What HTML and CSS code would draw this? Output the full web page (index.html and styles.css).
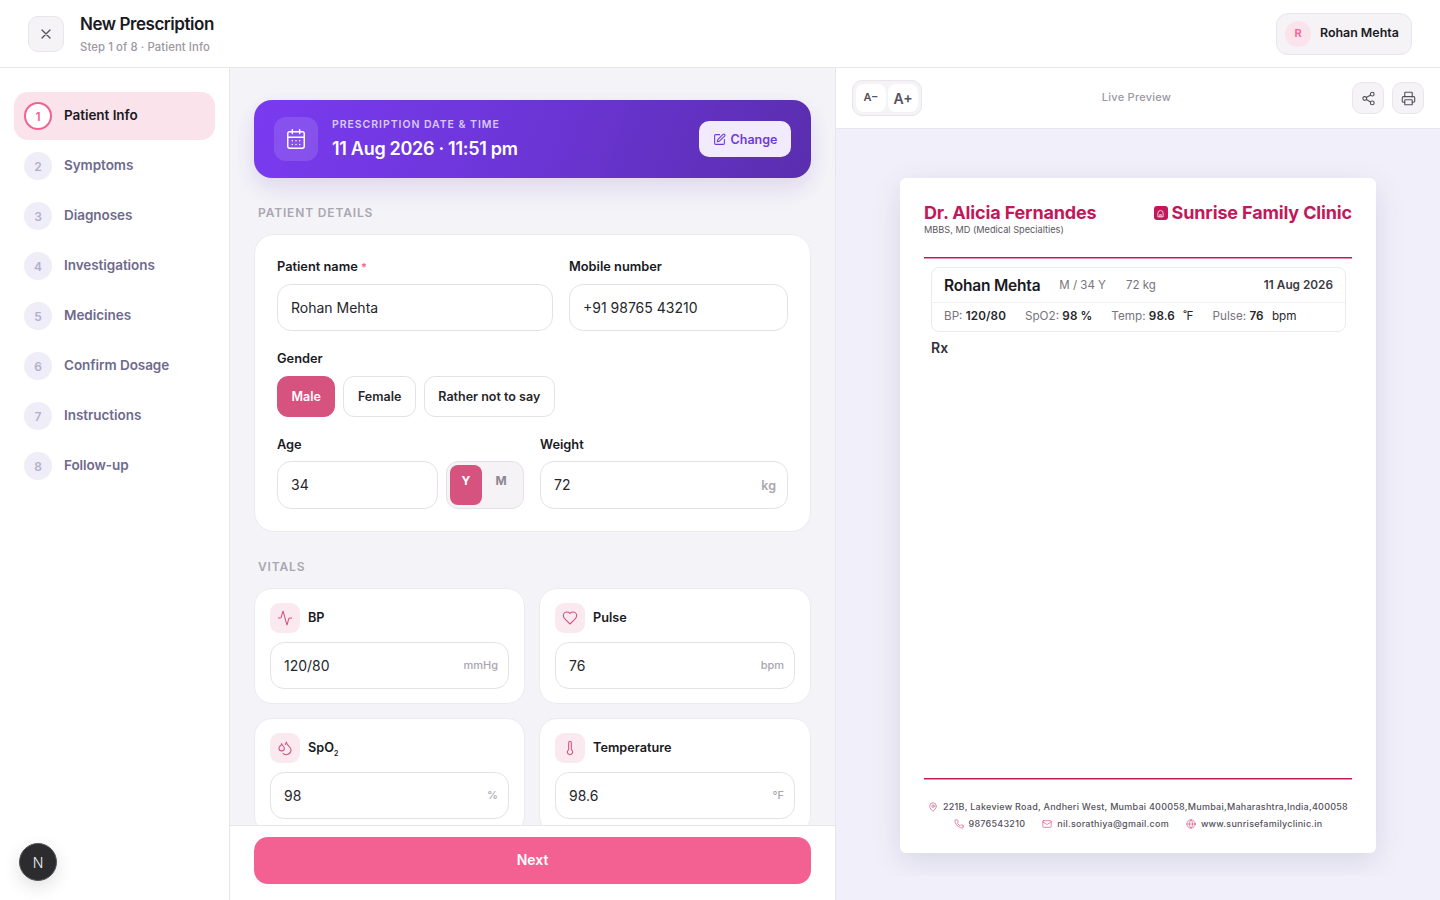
FILE: index.html
```html
<!DOCTYPE html>
<html lang="en">
<head>
  <meta charset="UTF-8">
  <meta name="viewport" content="width=device-width,initial-scale=1">
  <title>New Prescription</title>
  <link rel="stylesheet" href="styles.css">
</head>
<body>
  <svg class="sprite" aria-hidden="true">
    <symbol id="i-x" viewBox="0 0 24 24"><path d="M18 6 6 18M6 6l12 12"/></symbol>
    <symbol id="i-cal" viewBox="0 0 24 24"><rect x="3" y="4" width="18" height="18" rx="2"/><path d="M16 2v4M8 2v4M3 10h18M8 14h.01M12 14h.01M16 14h.01M8 18h.01M12 18h.01M16 18h.01"/></symbol>
    <symbol id="i-edit" viewBox="0 0 24 24"><path d="M12 3H5a2 2 0 0 0-2 2v14a2 2 0 0 0 2 2h14a2 2 0 0 0 2-2v-7"/><path d="M18.375 2.625a1 1 0 0 1 3 3l-9.013 9.014a2 2 0 0 1-.853.505l-2.873.84a.5.5 0 0 1-.62-.62l.84-2.873a2 2 0 0 1 .506-.852z"/></symbol>
    <symbol id="i-activity" viewBox="0 0 24 24"><path d="M22 12h-2.48a2 2 0 0 0-1.93 1.46l-2.35 8.36a.25.25 0 0 1-.48 0L9.24 2.18a.25.25 0 0 0-.48 0l-2.35 8.36A2 2 0 0 1 4.49 12H2"/></symbol>
    <symbol id="i-heart" viewBox="0 0 24 24"><path d="M19 14c1.49-1.46 3-3.21 3-5.5A5.5 5.5 0 0 0 16.5 3c-1.76 0-3 .5-4.5 2-1.5-1.5-2.74-2-4.5-2A5.5 5.5 0 0 0 2 8.5c0 2.3 1.5 4.05 3 5.5l7 7Z"/></symbol>
    <symbol id="i-drops" viewBox="0 0 24 24"><path d="M7 16.3c2.2 0 4-1.83 4-4.05 0-1.16-.57-2.26-1.71-3.19S7.29 6.75 7 5.3c-.29 1.45-1.14 2.84-2.29 3.76S3 11.1 3 12.25c0 2.22 1.8 4.05 4 4.05z"/><path d="M12.56 6.6A10.97 10.97 0 0 0 14 3.02c.5 2.5 2 4.9 4 6.5s3 3.5 3 5.5a6.98 6.98 0 0 1-11.91 4.97"/></symbol>
    <symbol id="i-temp" viewBox="0 0 24 24"><path d="M14 4v10.54a4 4 0 1 1-4 0V4a2 2 0 0 1 4 0Z"/></symbol>
    <symbol id="i-share" viewBox="0 0 24 24"><circle cx="18" cy="5" r="3"/><circle cx="6" cy="12" r="3"/><circle cx="18" cy="19" r="3"/><path d="m8.59 13.51 6.83 3.98M15.41 6.51l-6.82 3.98"/></symbol>
    <symbol id="i-print" viewBox="0 0 24 24"><path d="M6 18H4a2 2 0 0 1-2-2v-5a2 2 0 0 1 2-2h16a2 2 0 0 1 2 2v5a2 2 0 0 1-2 2h-2"/><path d="M6 9V3a1 1 0 0 1 1-1h10a1 1 0 0 1 1 1v6"/><rect x="6" y="14" width="12" height="8" rx="1"/></symbol>
    <symbol id="i-pin" viewBox="0 0 24 24"><path d="M20 10c0 4.993-5.539 10.193-7.399 11.799a1 1 0 0 1-1.202 0C9.539 20.193 4 14.993 4 10a8 8 0 0 1 16 0"/><circle cx="12" cy="10" r="3"/></symbol>
    <symbol id="i-phone" viewBox="0 0 24 24"><path d="M22 16.92v3a2 2 0 0 1-2.18 2 19.79 19.79 0 0 1-8.63-3.07 19.5 19.5 0 0 1-6-6 19.79 19.79 0 0 1-3.07-8.67A2 2 0 0 1 4.11 2h3a2 2 0 0 1 2 1.72 12.84 12.84 0 0 0 .7 2.81 2 2 0 0 1-.45 2.11L8.09 9.91a16 16 0 0 0 6 6l1.27-1.27a2 2 0 0 1 2.11-.45 12.84 12.84 0 0 0 2.81.7A2 2 0 0 1 22 16.92z"/></symbol>
    <symbol id="i-mail" viewBox="0 0 24 24"><rect x="2" y="4" width="20" height="16" rx="2"/><path d="m22 7-8.97 5.7a1.94 1.94 0 0 1-2.06 0L2 7"/></symbol>
    <symbol id="i-globe" viewBox="0 0 24 24"><circle cx="12" cy="12" r="10"/><path d="M12 2a14.5 14.5 0 0 0 0 20 14.5 14.5 0 0 0 0-20M2 12h20"/></symbol>
    <symbol id="i-home" viewBox="0 0 24 24"><path d="M5 20V11a7 7 0 0 1 14 0v9z"/><path d="M10 20v-5h4v5"/></symbol>
  </svg>

  <header class="topbar">
    <button class="close-btn" type="button"><svg class="icon"><use href="#i-x"/></svg></button>
    <div class="topbar-title">
      <h1>New Prescription</h1>
      <p>Step 1 of 8 · Patient Info</p>
    </div>
    <div class="user-chip"><span class="avatar">R</span><span class="user-name">Rohan Mehta</span></div>
  </header>

  <div class="layout">
    <nav class="steps">
      <a class="step active"><span class="step-num">1</span><span class="step-label">Patient Info</span></a>
      <a class="step"><span class="step-num">2</span><span class="step-label">Symptoms</span></a>
      <a class="step"><span class="step-num">3</span><span class="step-label">Diagnoses</span></a>
      <a class="step"><span class="step-num">4</span><span class="step-label">Investigations</span></a>
      <a class="step"><span class="step-num">5</span><span class="step-label">Medicines</span></a>
      <a class="step"><span class="step-num">6</span><span class="step-label">Confirm Dosage</span></a>
      <a class="step"><span class="step-num">7</span><span class="step-label">Instructions</span></a>
      <a class="step"><span class="step-num">8</span><span class="step-label">Follow-up</span></a>
      <div class="dev-badge">N</div>
    </nav>

    <main class="form-pane">
      <div class="form-scroll">
        <section class="date-card">
          <span class="date-icon"><svg class="icon"><use href="#i-cal"/></svg></span>
          <div class="date-text">
            <small>PRESCRIPTION DATE &amp; TIME</small>
            <strong>11 Aug 2026 · 11:51 pm</strong>
          </div>
          <button class="change-btn" type="button"><svg class="icon"><use href="#i-edit"/></svg>Change</button>
        </section>

        <h2 class="section-title">PATIENT DETAILS</h2>
        <section class="card details">
          <div class="row row-name">
            <label class="field">
              <span class="field-label">Patient name <em>*</em></span>
              <input class="text-input" type="text" value="Rohan Mehta">
            </label>
            <label class="field">
              <span class="field-label">Mobile number</span>
              <input class="text-input" type="text" value="+91 98765 43210">
            </label>
          </div>

          <div class="field">
            <span class="field-label">Gender</span>
            <div class="gender-opts">
              <button class="opt selected" type="button">Male</button>
              <button class="opt" type="button">Female</button>
              <button class="opt" type="button">Rather not to say</button>
            </div>
          </div>

          <div class="row row-age">
            <div class="field">
              <span class="field-label">Age</span>
              <div class="age-wrap">
                <input class="text-input tall" type="text" value="34">
                <div class="unit-toggle">
                  <span class="unit on">Y</span>
                  <span class="unit">M</span>
                </div>
              </div>
            </div>
            <div class="field">
              <span class="field-label">Weight</span>
              <div class="suffix-input">
                <input class="text-input tall" type="text" value="72">
                <span class="suffix big">kg</span>
              </div>
            </div>
          </div>
        </section>

        <h2 class="section-title">VITALS</h2>
        <section class="vitals">
          <div class="vital">
            <div class="vital-head"><span class="vital-icon"><svg class="icon"><use href="#i-activity"/></svg></span><span class="vital-name">BP</span></div>
            <div class="suffix-input"><input class="text-input" type="text" value="120/80"><span class="suffix">mmHg</span></div>
          </div>
          <div class="vital">
            <div class="vital-head"><span class="vital-icon"><svg class="icon"><use href="#i-heart"/></svg></span><span class="vital-name">Pulse</span></div>
            <div class="suffix-input"><input class="text-input" type="text" value="76"><span class="suffix">bpm</span></div>
          </div>
          <div class="vital">
            <div class="vital-head"><span class="vital-icon"><svg class="icon"><use href="#i-drops"/></svg></span><span class="vital-name">SpO<sub>2</sub></span></div>
            <div class="suffix-input"><input class="text-input" type="text" value="98"><span class="suffix">%</span></div>
          </div>
          <div class="vital">
            <div class="vital-head"><span class="vital-icon"><svg class="icon"><use href="#i-temp"/></svg></span><span class="vital-name">Temperature</span></div>
            <div class="suffix-input"><input class="text-input" type="text" value="98.6"><span class="suffix">°F</span></div>
          </div>
        </section>
      </div>
      <footer class="form-footer">
        <button class="next-btn" type="button">Next</button>
      </footer>
    </main>

    <aside class="preview-pane">
      <div class="preview-bar">
        <div class="font-size">
          <button class="fs-btn small" type="button">A−</button>
          <button class="fs-btn" type="button">A+</button>
        </div>
        <span class="preview-label">Live Preview</span>
        <div class="preview-actions">
          <button class="tool-btn" type="button"><svg class="icon"><use href="#i-share"/></svg></button>
          <button class="tool-btn" type="button"><svg class="icon"><use href="#i-print"/></svg></button>
        </div>
      </div>
      <div class="preview-scroll">
        <article class="paper">
          <div class="paper-head">
            <div>
              <div class="doc-name">Dr. Alicia Fernandes</div>
              <div class="doc-degree">MBBS, MD (Medical Specialties)</div>
            </div>
            <div class="clinic"><span class="clinic-logo"><svg class="icon"><use href="#i-home"/></svg></span>Sunrise Family Clinic</div>
          </div>
          <div class="patient-box">
            <div class="patient-top">
              <strong class="patient-name">Rohan Mehta</strong>
              <span>M / 34 Y</span>
              <span>72 kg</span>
              <b class="patient-date">11 Aug 2026</b>
            </div>
            <div class="patient-vitals">
              <span>BP: <b>120/80</b></span>
              <span>SpO2: <b>98 %</b></span>
              <span>Temp: <b>98.6</b> <i>˚F</i></span>
              <span>Pulse: <b>76</b> <i>bpm</i></span>
            </div>
          </div>
          <div class="rx">Rx</div>
          <div class="paper-foot">
            <div class="foot-line"><span class="foot-item"><svg class="icon"><use href="#i-pin"/></svg>221B, Lakeview Road, Andheri West, Mumbai 400058,Mumbai,Maharashtra,India,400058</span></div>
            <div class="foot-line">
              <span class="foot-item"><svg class="icon"><use href="#i-phone"/></svg>9876543210</span>
              <span class="foot-item"><svg class="icon"><use href="#i-mail"/></svg>nil.sorathiya@gmail.com</span>
              <span class="foot-item"><svg class="icon"><use href="#i-globe"/></svg>www.sunrisefamilyclinic.in</span>
            </div>
          </div>
        </article>
      </div>
    </aside>
  </div>
</body>
</html>
```

FILE: styles.css
```css
:root {
  --ink: #1a1a1f;
  --muted: #9b97a3;
  --line: #e8e5ec;
  --field-line: #e6e1e6;
  --pink: #f26191;
  --rose: #d6527f;
  --crimson: #c2185b;
  --soft: #f5f3f6;
}
* { box-sizing: border-box; }
html, body { height: 100%; }
body {
  margin: 0;
  overflow: hidden;
  background: #fff;
  color: var(--ink);
  font-family: Inter, "Liberation Sans", sans-serif;
  display: flex;
  flex-direction: column;
}
button { font-family: inherit; cursor: pointer; padding: 0; }
h1, h2, p { margin: 0; }
.sprite { display: none; }
.icon {
  width: 16px;
  height: 16px;
  fill: none;
  stroke: currentColor;
  stroke-width: 2;
  stroke-linecap: round;
  stroke-linejoin: round;
  flex: none;
}

/* top bar */
.topbar {
  height: 68px;
  flex: none;
  display: flex;
  align-items: center;
  padding: 0 28px;
  border-bottom: 1px solid var(--line);
}
.close-btn {
  width: 36px;
  height: 36px;
  border-radius: 10px;
  border: 1px solid var(--line);
  background: var(--soft);
  color: #55525c;
  display: flex;
  align-items: center;
  justify-content: center;
  margin-right: 16px;
}
.topbar-title h1 {
  font-size: 17px;
  line-height: 22px;
  font-weight: 600;
  letter-spacing: -0.45px;
}
.topbar-title p {
  font-size: 11.3px;
  line-height: 16px;
  margin-top: 4px;
  font-weight: 500;
  color: var(--muted);
  letter-spacing: 0.1px;
}
.user-chip {
  margin-left: auto;
  height: 42px;
  width: 136px;
  margin-top: 1px;
  display: flex;
  align-items: center;
  gap: 9px;
  padding-left: 8px;
  border: 1px solid var(--line);
  border-radius: 12px;
  background: var(--soft);
  font-size: 12.4px;
  font-weight: 600;
}
.user-name { margin-bottom: 3px; }
.avatar {
  width: 26px;
  height: 26px;
  border-radius: 50%;
  background: #fbe3ec;
  color: var(--pink);
  font-size: 11px;
  font-weight: 600;
  display: flex;
  align-items: center;
  justify-content: center;
  padding-bottom: 3px;
}

.layout { flex: 1; display: flex; min-height: 0; }

/* stepper */
.steps {
  position: relative;
  width: 230px;
  flex: none;
  border-right: 1px solid var(--line);
  padding: 24px 14px;
  display: flex;
  flex-direction: column;
  gap: 2px;
}
.step {
  height: 48px;
  display: flex;
  align-items: center;
  gap: 12px;
  padding-left: 10px;
  border-radius: 14px;
  font-size: 13.5px;
  font-weight: 600;
  color: #6e6a8c;
  letter-spacing: -0.05px;
}
.step-label { margin-bottom: 2px; }
.step-num {
  width: 28px;
  height: 28px;
  border-radius: 50%;
  background: #efedf7;
  color: #b3afcb;
  font-size: 12px;
  display: flex;
  align-items: center;
  justify-content: center;
}
.step.active { background: #fbe3ec; color: var(--ink); }
.step.active .step-num {
  background: #fff;
  border: 2px solid var(--pink);
  color: var(--pink);
}
.dev-badge {
  position: absolute;
  left: 19px;
  bottom: 19px;
  width: 38px;
  height: 38px;
  border-radius: 50%;
  background: #2c2c2e;
  border: 1px solid #55555a;
  box-shadow: 0 6px 18px #0000001f;
  color: #f2f2f2;
  font-size: 14px;
  font-weight: 300;
  display: flex;
  align-items: center;
  justify-content: center;
}

/* form pane */
.form-pane {
  width: 606px;
  flex: none;
  display: flex;
  flex-direction: column;
  border-right: 1px solid var(--line);
  background: #f4f4f8;
  min-height: 0;
}
.form-scroll {
  flex: 1;
  min-height: 0;
  overflow: hidden;
  padding: 32px 24px 0;
}
.date-card {
  height: 78px;
  border-radius: 18px;
  background: linear-gradient(110deg, #7a3bf0 0%, #6b35d6 50%, #5a2eae 100%);
  box-shadow: 0 10px 24px #5b2db026;
  display: flex;
  align-items: center;
  padding: 0 20px;
  color: #fff;
}
.date-icon {
  width: 44px;
  height: 44px;
  border-radius: 12px;
  background: #ffffff1f;
  display: flex;
  align-items: center;
  justify-content: center;
  margin-right: 14px;
}
.date-icon .icon { width: 22px; height: 22px; stroke-width: 1.6; }
.date-text small {
  display: block;
  font-size: 10.5px;
  line-height: 14px;
  font-weight: 600;
  letter-spacing: 0.95px;
  color: #d9c9fb;
}
.date-text strong {
  display: block;
  font-size: 18px;
  line-height: 24px;
  margin-top: 5px;
  font-weight: 600;
  letter-spacing: -0.3px;
}
.change-btn {
  margin-left: auto;
  width: 92px;
  height: 36px;
  border: 0;
  border-radius: 10px;
  background: #f1ebfd;
  color: #6f39dc;
  font-size: 12.5px;
  font-weight: 600;
  display: flex;
  align-items: center;
  justify-content: center;
  gap: 5px;
}
.change-btn .icon { width: 13px; height: 13px; }
.section-title {
  font-size: 12px;
  line-height: 16px;
  font-weight: 600;
  letter-spacing: 0.85px;
  color: #aaa6b0;
  padding-left: 4px;
  margin: 27px 0 13px;
}
.card {
  background: #fff;
  border: 1px solid #eceaef;
  border-radius: 20px;
}
.details {
  padding: 24px 22px 22px;
  display: flex;
  flex-direction: column;
  gap: 20px;
}
.row { display: grid; gap: 16px; }
.row-name { grid-template-columns: 276px 1fr; }
.row-age { grid-template-columns: 255px 1fr; gap: 8px; }
.row-age .field { gap: 8px; }
.field { display: flex; flex-direction: column; gap: 9px; min-width: 0; }
.field-label {
  font-size: 12.8px;
  line-height: 16px;
  font-weight: 600;
}
.field-label em { color: var(--pink); font-style: normal; font-size: 11px; }
.text-input {
  width: 100%;
  height: 47px;
  border: 1px solid var(--field-line);
  border-radius: 14px;
  background: #fff;
  padding: 0 13px 1px;
  font: 400 14px Inter, "Liberation Sans", sans-serif;
  color: #26262b;
  outline: none;
}
.text-input.tall { height: 48px; padding-bottom: 2px; }
.gender-opts { display: flex; gap: 8px; }
.opt {
  height: 41px;
  padding: 0 13.5px 1px;
  border: 1px solid var(--field-line);
  border-radius: 11px;
  background: #fff;
  color: #26262b;
  font-size: 12.5px;
  font-weight: 600;
}
.opt.selected { background: var(--rose); border-color: var(--rose); color: #fff; }
.age-wrap { display: grid; grid-template-columns: 161px 78px; gap: 8px; }
.unit-toggle {
  height: 48px;
  padding: 3px;
  border: 1px solid var(--field-line);
  border-radius: 12px;
  background: var(--soft);
  display: grid;
  grid-template-columns: 32px 1fr;
}
.unit {
  text-align: center;
  font-size: 12px;
  font-weight: 700;
  line-height: 32px;
  color: #8c8791;
  border-radius: 8px;
}
.unit.on { background: var(--rose); color: #fff; }
.suffix-input { position: relative; }
.suffix {
  position: absolute;
  right: 11px;
  top: 50%;
  transform: translateY(-50%);
  margin-top: -1px;
  font-size: 11px;
  font-weight: 500;
  color: #aaa6b0;
}
.suffix.big { font-size: 12.5px; right: 12px; font-weight: 600; margin-top: 0; }

/* vitals */
.vitals { display: grid; grid-template-columns: 271px 272px; gap: 14px; }
.vital {
  height: 116px;
  background: #fff;
  border: 1px solid #eceaef;
  border-radius: 18px;
  padding: 14px 15px;
}
.vital-head {
  height: 30px;
  display: flex;
  align-items: center;
  gap: 8px;
  font-size: 12.7px;
  font-weight: 600;
  margin-bottom: 9px;
}
.vital-name { margin-bottom: 2px; }
.vital-icon {
  width: 30px;
  height: 30px;
  border-radius: 9px;
  background: #faeaf0;
  color: var(--rose);
  display: flex;
  align-items: center;
  justify-content: center;
}
.vital-icon .icon { stroke-width: 1.6; }
sub { font-size: 7px; line-height: 0; }
.form-footer {
  flex: none;
  height: 75px;
  background: #fff;
  border-top: 1px solid var(--line);
  padding: 11px 24px 0;
}
.next-btn {
  width: 100%;
  height: 47px;
  border: 0;
  border-radius: 14px;
  background: var(--pink);
  color: #fff;
  font-size: 14px;
  font-weight: 600;
  padding-bottom: 2px;
}

/* preview */
.preview-pane {
  flex: 1;
  min-width: 0;
  background: #f1f0fa;
  display: flex;
  flex-direction: column;
}
.preview-bar {
  height: 61px;
  flex: none;
  background: #fff;
  border-bottom: 1px solid var(--line);
  display: flex;
  align-items: center;
  justify-content: space-between;
  padding: 0 16px;
}
.font-size {
  display: flex;
  gap: 2px;
  padding: 3px;
  height: 36px;
  width: 70px;
  border: 1px solid var(--line);
  border-radius: 10px;
  background: var(--soft);
}
.fs-btn {
  flex: 1;
  border: 0;
  border-radius: 8px;
  background: #fff;
  color: #55525c;
  font-size: 14px;
  font-weight: 600;
}
.fs-btn.small { font-size: 11px; padding-bottom: 2px; }
.preview-label {
  font-size: 11px;
  font-weight: 500;
  letter-spacing: 0.25px;
  color: var(--muted);
  margin-top: -2px;
  margin-left: -1px;
}
.preview-actions { display: flex; gap: 8px; }
.tool-btn {
  width: 32px;
  height: 32px;
  border: 1px solid var(--line);
  border-radius: 10px;
  background: var(--soft);
  color: #55525c;
  display: flex;
  align-items: center;
  justify-content: center;
}
.tool-btn .icon { width: 15px; height: 15px; stroke-width: 1.8; }
.preview-scroll {
  overflow: hidden;
  padding: 49px 0 23px;
  display: flex;
  justify-content: center;
}
.paper {
  width: 476px;
  height: 675px;
  background: #fff;
  border-radius: 6px;
  box-shadow: 0 8px 30px #1a1a4a1f;
  padding: 24px 24px 21px;
  display: flex;
  flex-direction: column;
}
.paper-head {
  height: 56px;
  flex: none;
  display: flex;
  justify-content: space-between;
  align-items: flex-start;
  border-bottom: 1px solid var(--crimson);
  box-shadow: 0 1px 0 #e58fb0;
}
.doc-name, .clinic {
  font-size: 18px;
  line-height: 22px;
  font-weight: 700;
  color: var(--crimson);
  letter-spacing: -0.15px;
}
.doc-degree {
  font-size: 9.2px;
  line-height: 12px;
  color: #5a5660;
}
.clinic { display: flex; align-items: center; gap: 4px; }
.clinic-logo {
  width: 14px;
  height: 14px;
  border-radius: 3px;
  background: var(--crimson);
  color: #fff;
  display: flex;
  align-items: center;
  justify-content: center;
}
.clinic-logo .icon { width: 9px; height: 9px; }
.patient-box {
  flex: none;
  margin: 9px 6px 0 7px;
  height: 65px;
  border: 1px solid #e9ebee;
  border-radius: 8px;
  font-size: 11.5px;
  color: #77747e;
}
.patient-top {
  height: 35px;
  display: flex;
  align-items: center;
  gap: 20px;
  padding: 0 12px;
  border-bottom: 1px solid #f0f0f2;
}
.patient-name {
  font-size: 15.5px;
  font-weight: 600;
  color: var(--ink);
  letter-spacing: -0.2px;
  margin-right: -1px;
}
.patient-date { margin-left: auto; font-size: 11.8px; font-weight: 600; color: #3c3a42; }
.patient-vitals {
  height: 26px;
  display: flex;
  align-items: center;
  gap: 19px;
  padding: 0 12px;
  font-size: 11.7px;
}
.patient-vitals b { font-weight: 600; color: #26262b; letter-spacing: 0.1px; }
.patient-vitals i { font-style: normal; color: #26262b; margin-left: 5px; }
.rx {
  flex: none;
  margin: 8px 0 0 7px;
  font-size: 14px;
  line-height: 16px;
  font-weight: 600;
  color: #333238;
}
.paper-foot {
  margin-top: auto;
  border-top: 1px solid var(--crimson);
  box-shadow: inset 0 1px 0 #e58fb0;
  padding-top: 19px;
  font-size: 9px;
  font-weight: 500;
  letter-spacing: 0.25px;
  color: #55525c;
}
.foot-line {
  display: flex;
  justify-content: center;
  gap: 17px;
  height: 17px;
  align-items: center;
}
.foot-item { display: flex; align-items: center; gap: 5px; white-space: nowrap; }
.foot-item .icon { width: 10px; height: 10px; color: var(--rose); stroke-width: 1.6; }
```
